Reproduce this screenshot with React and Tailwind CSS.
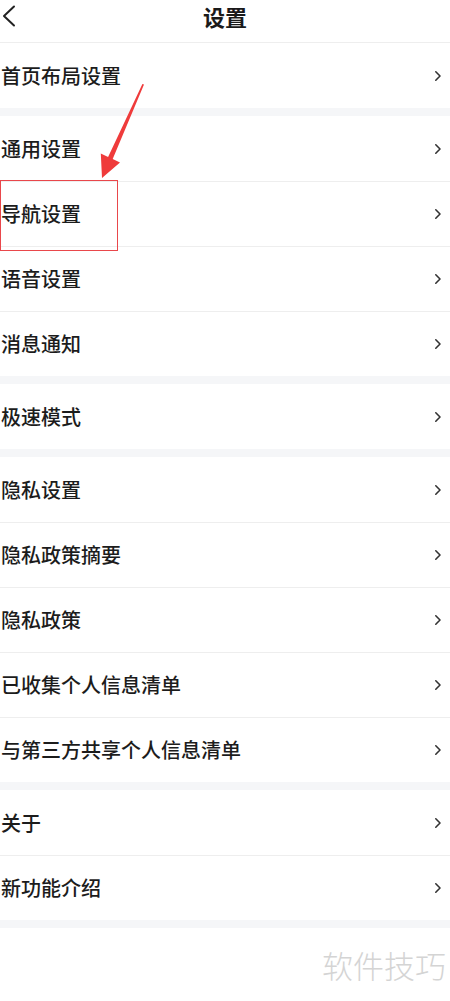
import React from 'react';

const groups = [
  ['首页布局设置'],
  ['通用设置', '导航设置', '语音设置', '消息通知'],
  ['极速模式'],
  ['隐私设置', '隐私政策摘要', '隐私政策', '已收集个人信息清单', '与第三方共享个人信息清单'],
  ['关于', '新功能介绍'],
];

const Chevron = () => (
  <svg width="8" height="12" viewBox="0 0 8 12" fill="none">
    <path d="M1.8 1.8L6 6l-4.2 4.2" stroke="#333" strokeWidth="1.6" strokeLinecap="round" strokeLinejoin="round" />
  </svg>
);

const Row = ({ label, first }) => (
  <div className={`h-[65px] flex items-center justify-between pl-[1px] pr-[8px] ${first ? '' : 'border-t border-[#eeeeee]'}`}>
    <span className="text-[20px] font-medium text-[#1c1c1c]">{label}</span>
    <Chevron />
  </div>
);

export default function App() {
  return (
    <div
      className="relative w-[450px] min-h-[1001px] bg-white overflow-hidden"
      style={{ fontFamily: '"Noto Sans CJK SC", "Noto Sans", sans-serif' }}
    >
      {/* Header */}
      <div className="relative h-[43px] flex items-center justify-center border-b border-[#eeeeee]">
        <svg className="absolute left-[2px] top-[5px]" width="14" height="22" viewBox="0 0 14 22" fill="none">
          <path d="M12 1.5L2 11l10 9.5" stroke="#222" strokeWidth="2" strokeLinecap="round" strokeLinejoin="round" />
        </svg>
        <span className="text-[22px] font-semibold text-[#1a1a1a] -mt-[9px]">设置</span>
      </div>

      {groups.map((items, gi) => (
        <div key={gi}>
          {items.map((label, i) => (
            <Row key={label} label={label} first={i === 0} />
          ))}
          <div className="h-[8px] bg-[#f5f6f8]" />
        </div>
      ))}

      {/* Watermark */}
      <div className="flex justify-end pr-[4px] pt-[14px]">
        <span className="text-[31px] font-light text-[#d4d4d4]">软件技巧</span>
      </div>

      {/* Red highlight box */}
      <div className="absolute left-0 top-[180px] w-[118px] h-[71px] border-[1.5px] border-[#e9474b]" />

      {/* Red arrow */}
      <svg className="absolute left-0 top-0 pointer-events-none" width="450" height="200" viewBox="0 0 450 200">
        <polygon
          points="144,84.5 112.7,159 120,162.5 102,178 100.8,153.5 108.1,157 142.4,84"
          fill="#ef3b3b"
        />
      </svg>
    </div>
  );
}
